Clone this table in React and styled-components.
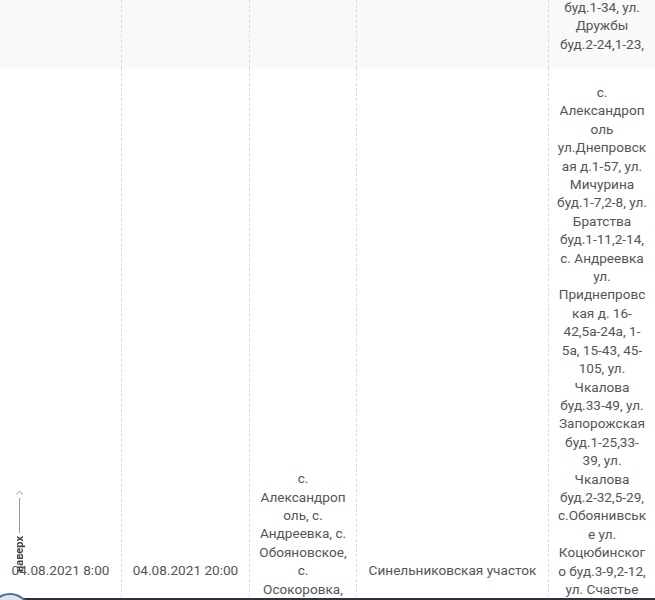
import React from 'react'
import styled, { createGlobalStyle } from 'styled-components'

const GlobalStyle = createGlobalStyle`
  body {
    margin: 0;
    background: #fff;
    font-family: Roboto, "Liberation Sans", Arial, sans-serif;
    overflow: hidden;
  }
`

// окно прокрутки: таблица уже прокручена вниз, первая строка видна только хвостом
const Viewport = styled.div`
  height: 100vh;
  overflow: hidden;
`

const Table = styled.table`
  width: 655px;
  margin-top: ${props => props.$scroll}px;
  border-collapse: separate;
  border-spacing: 0;
  table-layout: fixed;
  color: #555;
  font-size: 13.6px;
  line-height: 18.4px;
`

const Row = styled.tr`
  height: ${props => props.$h}px;
  background: ${props => (props.$odd ? '#f9f9f9' : '#fff')};
`

const Cell = styled.td`
  padding: 15px 8px;
  text-align: center;
  vertical-align: ${props => props.$valign || 'middle'};
  overflow-wrap: break-word;
  word-wrap: break-word;
  border-left: 1px dashed #dcdcdc;

  &:first-child {
    border-left: none;
  }
`

const ToTop = styled.a`
  position: fixed;
  left: 14px;
  bottom: 28px;
  display: flex;
  flex-direction: column;
  align-items: center;
  gap: 3px;
  color: #555;
  text-decoration: none;
  cursor: pointer;
`

const ToTopLine = styled.span`
  width: 1px;
  height: 35px;
  background: #9a9a9a;
`

const ToTopLabel = styled.span`
  writing-mode: vertical-rl;
  transform: rotate(180deg);
  font-size: 11px;
  font-weight: 700;
  line-height: 11px;
  color: #444;
`

const BottomBar = styled.div`
  position: fixed;
  left: 0;
  right: 0;
  bottom: 0;
  height: 2px;
  background: #2f3337;
`

const RoundButton = styled.div`
  position: fixed;
  left: -11px;
  bottom: -35px;
  width: 38px;
  height: 38px;
  border-radius: 50%;
  border: 2px solid #3f73a8;
  background: #dfe5eb;
`

const rows = [
  {
    from: '03.08.2021 8:00',
    to: '03.08.2021 20:00',
    villages: 'с. Раевка, с. Варваровка, с. Зайцево',
    area: 'Синельниковская участок',
    streets:
      'с. Раевка ул. Шевченко буд.1-45,2-38, ул. Садовая буд.3-17, ул. Гагарина буд.1-34, ул. Дружбы буд.2-24,1-23,',
    h: 640,
  },
  {
    from: '04.08.2021 8:00',
    to: '04.08.2021 20:00',
    villages:
      'с. Александрополь, с. Андреевка, с. Обояновское, с. Осокоровка, с. Зелёное, с. Роздоры, с. Писаревка, с. Новоселовка',
    area: 'Синельниковская участок',
    streets:
      'с. Александрополь ул.Днепровская д.1-57, ул. Мичурина буд.1-7,2-8, ул. Братства буд.1-11,2-14, с. Андреевка ул. Приднепровская д. 16-42,5а-24а, 1-5а, 15-43, 45-105, ул. Чкалова буд.33-49, ул. Запорожская буд.1-25,33-39, ул. Чкалова буд.2-32,5-29, с.Обоянивське ул. Коцюбинского буд.3-9,2-12, ул. Счастье буд.1-15,2-20, ул. Садовая буд.1-31,2-44, с. Осокоровка ул. Центральная буд.1-45,2-58, ул. Шевченко буд.1-17,2-22, ул. Мира буд.4-30',
    h: 1005,
  },
]

export default function App() {
  return (
    <Viewport>
      <GlobalStyle />
      <Table $scroll={-(rows[0].h - 68)}>
        <colgroup>
          <col style={{ width: 121 }} />
          <col style={{ width: 128 }} />
          <col style={{ width: 107 }} />
          <col style={{ width: 192 }} />
          <col style={{ width: 107 }} />
        </colgroup>
        <tbody>
          {rows.map((r, i) => (
            <Row key={i} $h={r.h} $odd={i % 2 === 0}>
              <Cell>{r.from}</Cell>
              <Cell>{r.to}</Cell>
              <Cell>{r.villages}</Cell>
              <Cell>{r.area}</Cell>
              <Cell $valign={i === 0 ? 'bottom' : 'top'}>{r.streets}</Cell>
            </Row>
          ))}
        </tbody>
      </Table>

      <ToTop>
        <svg width="7" height="5" viewBox="0 0 7 5" fill="none">
          <path d="M0.5 4.5 L3.5 1 L6.5 4.5" stroke="#9a9a9a" strokeWidth="1" />
        </svg>
        <ToTopLine />
        <ToTopLabel>наверх</ToTopLabel>
      </ToTop>

      <BottomBar />
      <RoundButton />
    </Viewport>
  )
}
